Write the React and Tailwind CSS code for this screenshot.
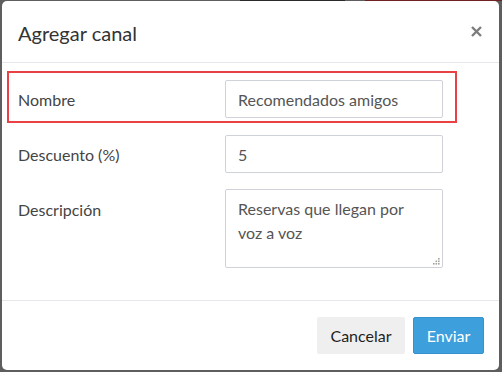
import React from 'react';

const font = { fontFamily: 'Lato, "Open Sans", sans-serif' };

const Field = ({ label, children, top }) => (
  <div className={`flex ${top ? 'items-start' : 'items-center'}`}>
    <label className={`w-[207px] shrink-0 text-[16px] leading-[19px] text-[#444] ${top ? 'pt-[11px]' : ''}`}>
      {label}
    </label>
    {children}
  </div>
);

const inputCls =
  'w-[218px] h-[38px] rounded-[2px] border border-[#cfd3d9] bg-white px-[12px] text-[16px] text-[#555] outline-none';

export default function App() {
  return (
    <div className="w-[502px] h-[372px] bg-[#5e5e5e] overflow-hidden" style={font}>
      {/* page behind the overlay */}
      <div className="flex h-[1px]">
        <div className="w-[240px]" />
        <div className="w-[105px] bg-[#2a2a2a]" />
        <div className="w-[20px]" />
        <div className="w-[137px] bg-[#6e2022]" />
      </div>

      <div className="ml-[2px] w-[497px] h-[369px] rounded-[5px] bg-white flex flex-col">
        {/* Header */}
        <div className="flex items-start justify-between h-[62px] border-b border-[#e5e7eb] pl-[16px] pr-[17px] pt-[20px]">
          <h4 className="text-[20px] leading-[24px] text-[#333]">Agregar canal</h4>
          <button className="mt-[5px]">
            <svg width="11" height="11" viewBox="0 0 11 11">
              <path d="M1 1 L10 10 M10 1 L1 10" stroke="#7c7c7c" strokeWidth="2.4" strokeLinecap="butt" />
            </svg>
          </button>
        </div>

        {/* Body */}
        <div className="flex flex-col px-[5px] pt-[8px] pb-[32px] border-b border-[#e5e7eb]">
          <div className="w-[450px] border-2 border-[#ea4244] pl-[9px] pt-[7px] pb-[3px]">
            <Field label="Nombre">
              <input className={inputCls} defaultValue="Recomendados amigos" />
            </Field>
          </div>

          <div className="pl-[11px] mt-[12px]">
            <Field label="Descuento (%)">
              <input className={inputCls} defaultValue="5" />
            </Field>
          </div>

          <div className="pl-[11px] mt-[16px]">
            <Field label="Descripción" top>
              <div className="relative">
                <textarea
                  className="block w-[218px] h-[79px] resize-none rounded-[2px] border border-[#cfd3d9] bg-white px-[12px] pt-[7px] text-[16px] leading-[24px] text-[#555] outline-none"
                  defaultValue="Reservas que llegan por voz a voz"
                />
                {/* resize grip */}
                <svg className="absolute right-[3px] bottom-[2px]" width="9" height="9" viewBox="0 0 9 9">
                  <g fill="#a3a3a3">
                    <rect x="7" y="1" width="1.6" height="1.6" />
                    <rect x="4.5" y="3.5" width="1.6" height="1.6" />
                    <rect x="7" y="3.5" width="1.6" height="1.6" />
                    <rect x="2" y="6" width="1.6" height="1.6" />
                    <rect x="4.5" y="6" width="1.6" height="1.6" />
                    <rect x="7" y="6" width="1.6" height="1.6" />
                  </g>
                </svg>
              </div>
            </Field>
          </div>
        </div>

        {/* Footer */}
        <div className="flex justify-end gap-[8px] pt-[16px] pr-[15px]">
          <button className="w-[88px] h-[37px] rounded-[2px] bg-[#efefef] text-[16px] text-[#1f1f1f]">
            Cancelar
          </button>
          <button className="w-[71px] h-[37px] rounded-[2px] bg-[#3d9fdc] border border-[#3592cf] text-[16px] text-white">
            Enviar
          </button>
        </div>
      </div>
    </div>
  );
}
